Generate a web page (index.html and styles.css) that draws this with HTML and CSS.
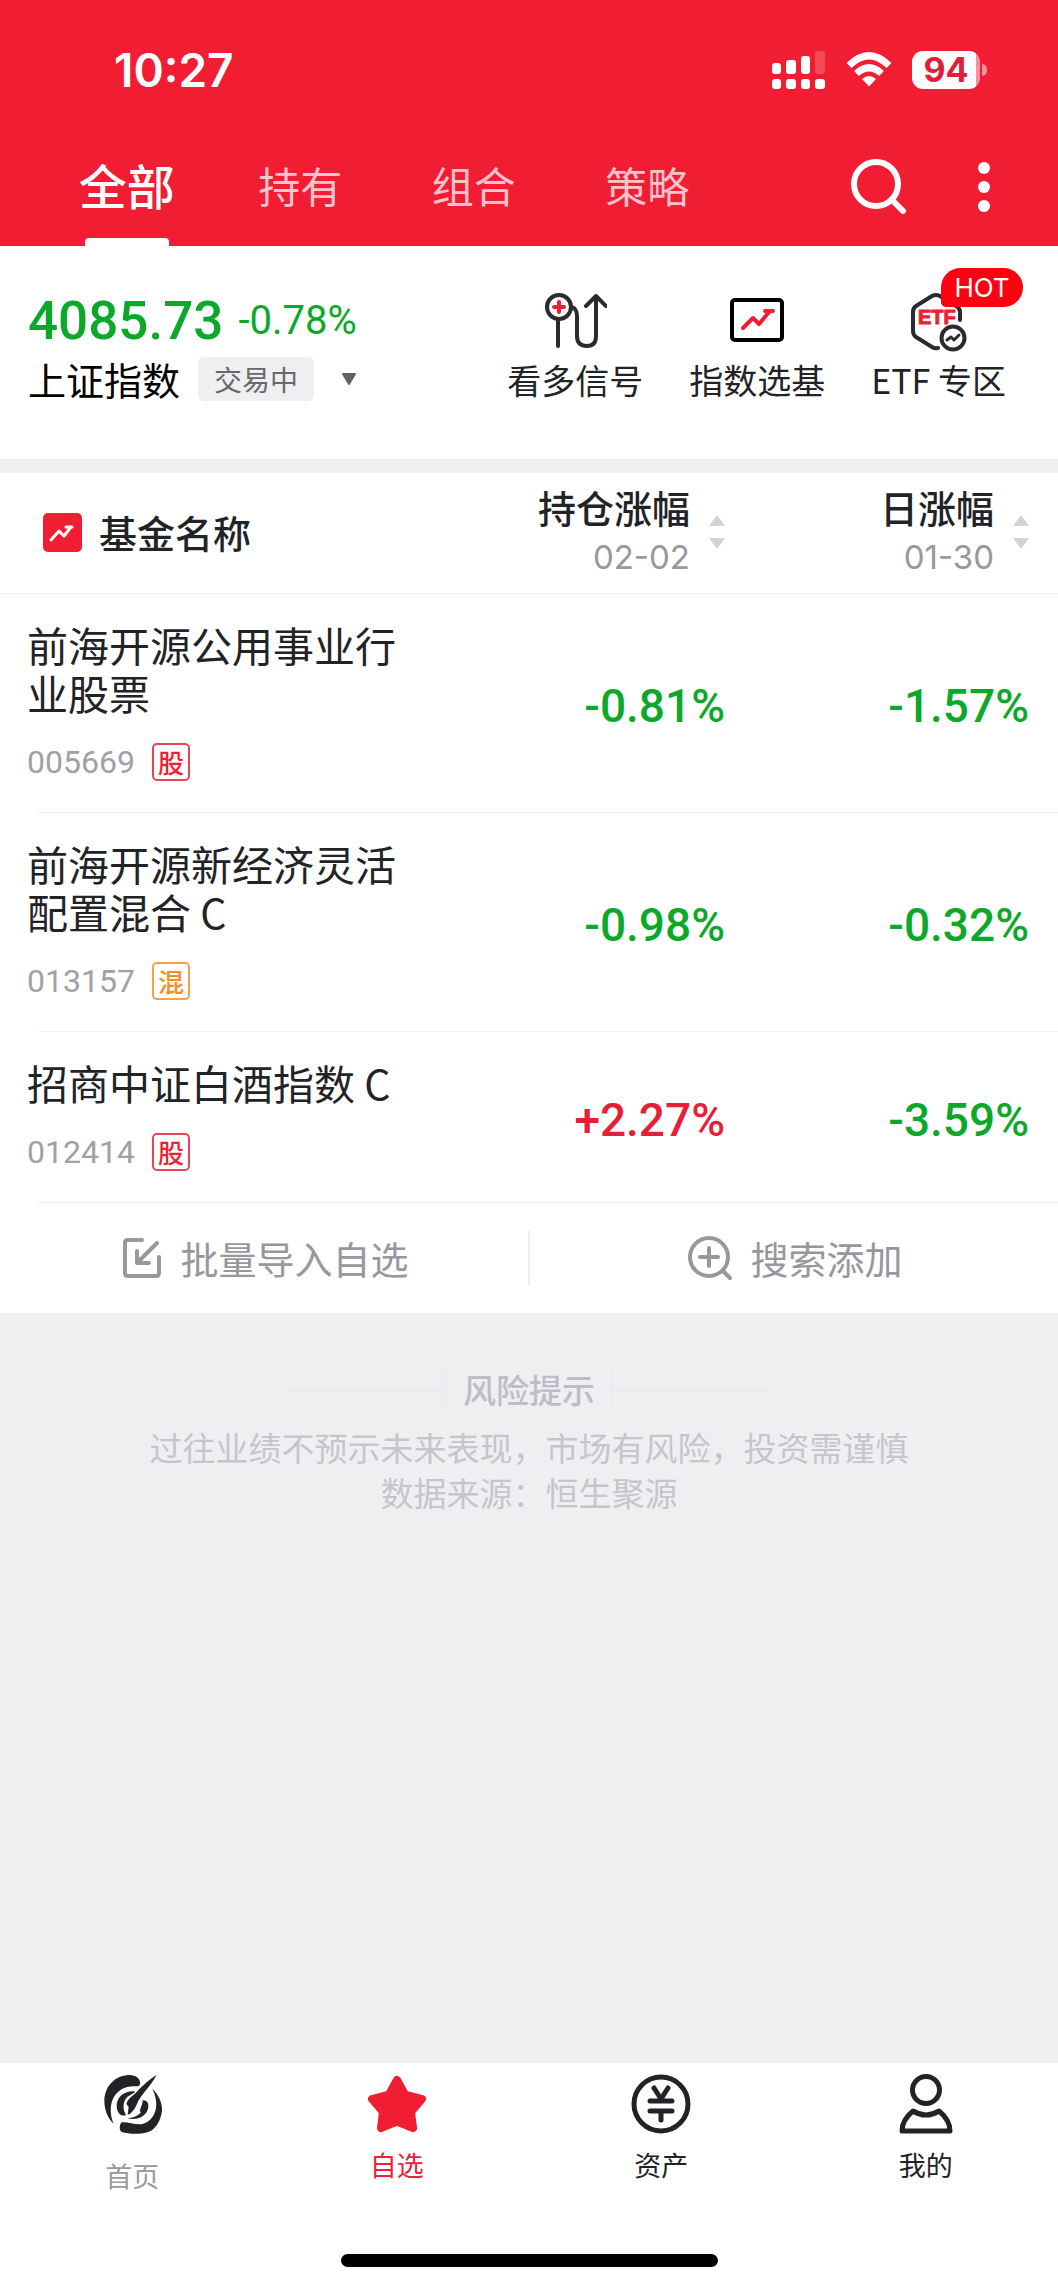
FILE: index.html
```html
<!DOCTYPE html>
<html lang="zh-CN">
<head>
<meta charset="utf-8">
<meta name="viewport" content="width=device-width, initial-scale=1">
<title>自选基金</title>
<link rel="stylesheet" href="styles.css">
</head>
<body>
<header class="top">
  <div class="status">
    <time class="clock">10:27</time>
    <div class="status-icons">
      <svg class="signal" viewBox="0 0 54 38" aria-hidden="true">
        <g fill="#fff">
          <rect x="0" y="12" width="9" height="11" rx="3"/><rect x="14" y="9" width="10" height="14" rx="3"/><rect x="29" y="5" width="9" height="18" rx="3"/>
          <rect x="0" y="28" width="9" height="10" rx="3"/><rect x="14" y="28" width="10" height="10" rx="3"/><rect x="29" y="28" width="9" height="10" rx="3"/><rect x="43" y="28" width="10" height="10" rx="3"/>
        </g>
        <rect x="43" y="0" width="10" height="23" rx="3" fill="#fff" opacity=".2"/>
      </svg>
      <svg class="wifi" viewBox="0 0 46 38" aria-hidden="true">
        <g fill="none" stroke="#fff" stroke-width="7">
          <path d="M3 14.500Q23-5 43 14.500"/><path d="M10.500 22.500Q23 11 35.500 22.500"/>
        </g>
        <path d="M16 28Q23 22 30 28L23 35.500Z" fill="#fff"/>
      </svg>
      <div class="battery"><span class="charge">94</span></div>
    </div>
  </div>
  <div class="tabbar">
    <nav class="tabs">
      <a class="tab tab-on" href="#all">全部</a>
      <a class="tab" href="#held">持有</a>
      <a class="tab" href="#combo">组合</a>
      <a class="tab" href="#strategy">策略</a>
    </nav>
    <div class="tools">
      <button class="tool" type="button" aria-label="搜索">
        <svg viewBox="0 0 56 56" width="56" height="56" fill="none" stroke="#fff" stroke-width="6" stroke-linecap="round"><circle cx="25" cy="25" r="22"/><path d="M42 42L52 52"/></svg>
      </button>
      <button class="tool" type="button" aria-label="更多">
        <svg viewBox="0 0 12 56" width="12" height="56" fill="#fff"><circle cx="6" cy="9" r="6"/><circle cx="6" cy="28" r="6"/><circle cx="6" cy="47" r="6"/></svg>
      </button>
    </div>
  </div>
</header>

<section class="market">
  <div class="index">
    <div class="quote"><span class="price">4085.73</span><span class="change">-0.78%</span></div>
    <button class="picker" type="button"><span>上证指数</span><span class="session">交易中</span>
      <svg viewBox="0 0 16 12" width="16" height="12" aria-hidden="true"><path d="M2 1H14L8 11Z" fill="#626266" stroke="#626266" stroke-width="2" stroke-linejoin="round"/></svg>
    </button>
  </div>
  <nav class="links">
    <a class="link" href="#signal">
      <svg viewBox="0 0 64 60" width="64" height="60" fill="none" stroke="#2a2b2e" stroke-width="4" stroke-linecap="round" stroke-linejoin="round"><circle cx="16" cy="15" r="12"/><path d="M15 28V54M29 15Q34 17 34 24V44Q34 54 44 54Q53 54 53 44V4M43 14L53 4L63 14"/><path d="M16 10V20M11 15H21" stroke="#f01d33"/></svg>
      <span>看多信号</span>
    </a>
    <a class="link" href="#index-funds">
      <svg viewBox="0 0 64 60" width="64" height="60" fill="none" stroke-width="4" stroke-linecap="round" stroke-linejoin="round"><rect x="7" y="8" width="50" height="40" rx="3" stroke="#000"/><path d="M18 36L28 26L34 32L45 19M40 19H48" stroke="#f01d33"/></svg>
      <span>指数选基</span>
    </a>
    <a class="link" href="#etf">
      <svg viewBox="0 0 64 60" width="64" height="60" fill="none" stroke="#2a2b2e" stroke-width="4" stroke-linecap="round" stroke-linejoin="round"><path d="M31 56Q28 57 25 55L9 45Q6 43 6 39V20Q6 16 9 14L25 4Q29 2 33 4L49 14Q53 16 53 20V28"/><circle cx="46" cy="46" r="11.500"/><path d="M40 48L44 45L47 48L52 43" stroke-width="3"/><text x="11" y="32" class="etf-mark">ETF</text></svg>
      <span>ETF 专区</span>
      <em class="hot">HOT</em>
    </a>
  </nav>
</section>

<main class="content">
  <table class="funds">
    <thead>
      <tr>
        <th class="col-name" scope="col"><div class="name-head">
          <svg viewBox="0 0 39 39" width="39" height="39" aria-hidden="true"><rect width="39" height="39" rx="5" fill="#f01d33"/><path d="M8 27L16 18L21 23L28 14M23 14H29" fill="none" stroke="#fff" stroke-width="3" stroke-linecap="round" stroke-linejoin="round"/></svg>
          <span>基金名称</span></div></th>
        <th scope="col"><button class="sort" type="button"><span class="sort-text">持仓涨幅<small>02-02</small></span><svg viewBox="0 0 16 34" width="16" height="34" fill="#d2d2d7"><path d="M0 11L8 0L16 11ZM0 23H16L8 34Z"/></svg></button></th>
        <th class="col-day" scope="col"><button class="sort" type="button"><span class="sort-text">日涨幅<small>01-30</small></span><svg viewBox="0 0 16 34" width="16" height="34" fill="#d2d2d7"><path d="M0 11L8 0L16 11ZM0 23H16L8 34Z"/></svg></button></th>
      </tr>
    </thead>
    <tbody>
      <tr>
        <td class="col-name"><a class="fund" href="#005669">前海开源公用事业行业股票</a><div class="meta"><span>005669</span><span class="tag">股</span></div></td>
        <td class="down">-0.81%</td><td class="down col-day">-1.57%</td>
      </tr>
      <tr>
        <td class="col-name"><a class="fund" href="#013157">前海开源新经济灵活配置混合 C</a><div class="meta"><span>013157</span><span class="tag tag-mixed">混</span></div></td>
        <td class="down">-0.98%</td><td class="down col-day">-0.32%</td>
      </tr>
      <tr>
        <td class="col-name"><a class="fund" href="#012414">招商中证白酒指数 C</a><div class="meta"><span>012414</span><span class="tag">股</span></div></td>
        <td class="up">+2.27%</td><td class="down col-day">-3.59%</td>
      </tr>
    </tbody>
  </table>
  <div class="actions">
    <button class="action" type="button">
      <svg viewBox="0 0 40 42" width="40" height="42" fill="none" stroke="#97979e" stroke-width="4" stroke-linecap="round" stroke-linejoin="round"><path d="M20 3H6Q3 3 3 6V36Q3 39 6 39H34Q37 39 37 36V20M35 6L16 25M15 14V26H27"/></svg>
      <span>批量导入自选</span>
    </button>
    <button class="action" type="button">
      <svg viewBox="0 0 44 46" width="44" height="46" fill="none" stroke="#97979e" stroke-width="4" stroke-linecap="round"><circle cx="21" cy="22" r="19"/><path d="M21 13V31M12 22H30M36 37L42 43"/></svg>
      <span>搜索添加</span>
    </button>
  </div>
  <section class="risk">
    <h2 class="risk-title"><span>风险提示</span></h2>
    <p>过往业绩不预示未来表现，市场有风险，投资需谨慎</p>
    <p>数据来源：恒生聚源</p>
  </section>
</main>

<footer class="bottom">
  <nav class="menu">
    <a class="item item-home" href="#home">
      <svg viewBox="20 18 180 180" width="60" height="60" fill="#222326"><path d="M134 42C132 28 118 21 100 21C60 23 30 52 27 96C27 128 38 152 55 167C44 142 43 112 54 90C68 64 92 52 126 55C133 53 136 48 134 42Z"/><path d="M171 62C192 82 201 106 200 128C196 162 178 186 156 193C130 200 100 198 80 193C70 186 72 170 79 163C98 161 118 171 142 168C183 155 194 108 171 62Z"/><path d="M117 70C86 68 63 88 64 116C66 136 78 147 92 141C80 122 82 92 104 82Q112 78 119 72Z"/><path d="M184 20C162 35 142 52 129 66C118 82 98 88 93 108L100 116L97 140C110 138 122 116 129 98C142 76 170 48 184 20Z"/><path d="M142 97C156 95 162 108 158 122C152 146 122 159 96 150C112 150 126 144 136 134C130 124 142 114 142 97Z"/></svg>
      <span>首页</span>
    </a>
    <a class="item item-on" href="#watchlist">
      <svg viewBox="0 0 60 60" width="60" height="60" fill="#f01d33" stroke="#f01d33" stroke-width="8" stroke-linejoin="round"><path d="M30 6L38 20.500L55 25L44 38L46 54L30 47.500L14 54L16 38L5 25L22 20.500Z"/></svg>
      <span>自选</span>
    </a>
    <a class="item" href="#assets">
      <svg viewBox="0 0 60 60" width="60" height="60" fill="none" stroke="#222326" stroke-width="5" stroke-linecap="round" stroke-linejoin="round"><circle cx="30" cy="30" r="27"/><path d="M23 14L30 25L37 14M19 27H41M19 37H41M30 37V46"/></svg>
      <span>资产</span>
    </a>
    <a class="item" href="#me">
      <svg viewBox="0 0 60 60" width="60" height="60" fill="none" stroke="#222326" stroke-width="5" stroke-linecap="round" stroke-linejoin="round"><circle cx="30" cy="16" r="13.500"/><path d="M17 37Q30 45 43 37Q54 46 54 57H6Q6 46 17 37Z"/></svg>
      <span>我的</span>
    </a>
  </nav>
  <div class="home-bar"></div>
</footer>
</body>
</html>
```
FILE: styles.css
```css
* { box-sizing: border-box; }
body {
  margin: 0;
  min-height: 100vh;
  display: flex;
  flex-direction: column;
  background: #fff;
  color: #222326;
  font-family: "Noto Sans CJK SC", sans-serif;
}
a { color: inherit; text-decoration: none; }
button { padding: 0; border: 0; background: none; color: inherit; font: inherit; }
svg { display: block; flex: none; }

.top { background: #f01d33; color: #fff; }
.status {
  display: flex;
  justify-content: space-between;
  align-items: center;
  height: 140px;
  padding: 0 71px 0 114px;
}
.clock { font: 600 46px/56px Inter, sans-serif; }
.status-icons { display: flex; align-items: center; gap: 20px; }
.signal { width: 54px; height: 38px; }
.wifi { width: 46px; height: 38px; }
.battery { display: flex; align-items: center; gap: 2px; }
.battery::after { content: ""; width: 5px; height: 12px; border-radius: 0 6px 6px 0; background: #f98f9a; }
.charge {
  width: 68px;
  height: 38px;
  border-radius: 11px;
  background: linear-gradient(90deg, #fff 64px, #f98f9a 64px);
  color: #e0203a;
  font: 700 34px/38px Inter, sans-serif;
  text-align: center;
}

.tabbar { display: flex; justify-content: space-between; height: 106px; padding: 0 68px 0 40px; }
.tabs { display: flex; flex: 0 1 694px; }
.tab {
  flex: 1;
  display: flex;
  flex-direction: column;
  align-items: center;
  color: #ffc3cc;
  font-size: 42px;
  line-height: 90px;
}
.tab-on { color: #fff; font-size: 48px; font-weight: 500; line-height: 88px; }
.tab-on::after { content: ""; width: 84px; height: 8px; margin-top: 10px; border-radius: 4px 4px 0 0; background: #fff; }
.tools { display: flex; gap: 71px; height: 94px; align-items: center; }

.market {
  display: flex;
  justify-content: space-between;
  padding: 42px 52px 51px 28px;
  border-bottom: 14px solid #efeff2;
}
.quote {
  display: flex;
  align-items: center;
  gap: 15px;
  color: #0ba829;
  font-family: Roboto, sans-serif;
  line-height: 66px;
}
.price { font-size: 53px; font-weight: 500; }
.change { font-size: 40px; }
.picker { display: flex; align-items: center; height: 50px; color: #000; font-size: 38px; line-height: 48px; }
.session {
  margin: 0 27px 0 18px;
  padding: 0 16px;
  border-radius: 6px;
  background: #efeff2;
  color: #68686c;
  font-size: 28px;
  line-height: 44px;
}
.links { display: flex; gap: 46px; }
.link { position: relative; display: flex; flex-direction: column; align-items: center; font-size: 34px; line-height: 56px; }
.link svg { margin-top: 4px; }
.etf-mark { fill: #f01d33; stroke: #f01d33; stroke-width: 1px; font: 700 20px "Liberation Sans", sans-serif; }
.hot {
  position: absolute;
  top: -20px;
  right: -17px;
  width: 82px;
  border-radius: 20px 20px 20px 5px;
  background: #fd0111;
  color: #fff;
  font: 400 26px/39px Inter, sans-serif;
  text-align: center;
}

.content { flex: 1; background: #efeff2; }
.funds { width: 100%; border-collapse: collapse; table-layout: fixed; background: #fff; }
.funds tr { background: linear-gradient(#efeff2, #efeff2) no-repeat 38px 100% / 100% 1px; }
.funds thead tr { background-position: 0 100%; }
.funds th { height: 121px; padding: 0 0 3px; font-size: 38px; font-weight: 500; line-height: 48px; }
.funds td {
  padding: 5px 0 0;
  text-align: right;
  font: 500 46px/50px Roboto, sans-serif;
}
.funds .col-name { width: 430px; padding-left: 28px; text-align: left; }
.funds .col-day { width: 333px; padding-right: 29px; }
.name-head { display: flex; align-items: center; gap: 17px; padding-left: 15px; }
.sort { display: flex; align-items: center; gap: 19px; margin-left: auto; line-height: 50px; }
.sort-text { display: flex; flex-direction: column; text-align: right; }
.sort-text small { color: #98989f; font: 400 33px/50px Inter, sans-serif; }
.funds tbody .col-name { padding: 26px 0 32px 27px; font-family: "Noto Sans CJK SC", sans-serif; font-weight: 400; }
.fund { display: block; max-width: 380px; font-size: 41px; line-height: 48px; }
.meta { display: flex; align-items: center; gap: 17px; margin-top: 27px; color: #a0a0a6; font: 400 32px/38px Roboto, sans-serif; }
.tag {
  width: 38px;
  height: 38px;
  border: 2px solid #e8435a;
  border-radius: 5px;
  color: #f01d33;
  font: 500 26px/34px "Noto Sans CJK SC", sans-serif;
  text-align: center;
}
.tag-mixed { border-color: #f5a04a; color: #fa8c1e; }
.down { color: #0ba829; }
.up { color: #e61f38; }

.actions { display: flex; height: 110px; align-items: center; background: #fff; }
.action {
  flex: 1;
  display: flex;
  justify-content: center;
  align-items: center;
  gap: 18px;
  height: 54px;
  padding-left: 3px;
  color: #97979e;
  font-size: 38px;
  line-height: 54px;
}
.action + .action { border-left: 2px solid #ededf1; }

.risk { padding: 54px 20px; color: #c5c5ce; font-size: 33px; line-height: 45px; text-align: center; }
.risk p { margin: 0; }
.risk-title { display: flex; justify-content: center; align-items: center; margin: 0 0 13px; color: #bdbdc8; font-size: 33px; font-weight: 500; }
.risk-title::before, .risk-title::after { content: ""; width: 162px; height: 2px; background: #e9e9ee; }
.risk-title span { padding: 0 16px; border: solid #e9e9ee; border-width: 0 1px; }

.bottom { background: #fff; padding-bottom: 23px; }
.menu { display: flex; height: 191px; padding-top: 11px; }
.item { flex: 1; display: flex; flex-direction: column; align-items: center; gap: 12px; font-size: 27px; line-height: 38px; }
.item-home { gap: 23px; }
.item-home span { color: #999; }
.item-on { color: #e8233c; }
.home-bar { width: 377px; height: 13px; margin: 0 auto; border-radius: 7px; background: #000; }
```
